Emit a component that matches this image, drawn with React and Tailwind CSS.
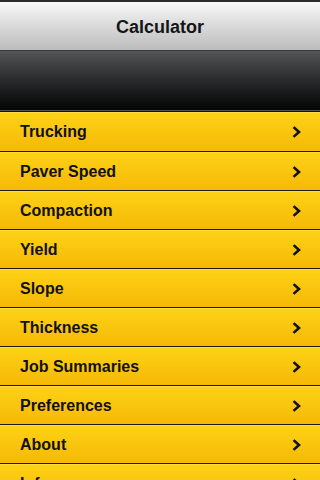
import React from 'react';

const items = [
  'Trucking',
  'Paver Speed',
  'Compaction',
  'Yield',
  'Slope',
  'Thickness',
  'Job Summaries',
  'Preferences',
  'About',
  'Info',
];

const Chevron = () => (
  <svg width="10" height="12" viewBox="0 0 10 12" className="shrink-0">
    <path d="M2.5 2 L7 6 L2.5 10" fill="none" stroke="#111" strokeWidth="2.6" strokeLinecap="square" strokeLinejoin="miter" />
  </svg>
);

const App = () => {
  return (
    <div className="w-[320px] h-[480px] overflow-hidden bg-black" style={{ fontFamily: '"Liberation Sans", Arial, sans-serif' }}>
      {/* status strip */}
      <div className="h-[2px] bg-[#2b2b2b]" />

      {/* nav bar */}
      <div className="h-[49px] flex items-center justify-center pt-[1px] bg-gradient-to-b from-[#f8f8f8] to-[#bcbcbc] border-b border-[#3a3a3a]">
        <h1 className="text-[18px] font-bold text-[#151515] leading-none">Calculator</h1>
      </div>

      {/* dark band */}
      <div className="h-[60px] bg-gradient-to-b from-[#545556] to-[#050606] border-b border-[#555]" />
      <div className="h-[1px] bg-[#111]" />

      {/* menu list */}
      <ul>
        {items.map((label) => (
          <li
            key={label}
            className="h-[39px] first:h-[40px] flex items-center justify-between pl-[20px] pr-[18px] bg-gradient-to-b from-[#fdd215] to-[#f6b806] border-t border-t-[#fddc45] border-b border-b-[#1c1a10]"
          >
            <span className="text-[16px] font-bold text-[#111]">{label}</span>
            <Chevron />
          </li>
        ))}
      </ul>
    </div>
  );
};

export default App;
